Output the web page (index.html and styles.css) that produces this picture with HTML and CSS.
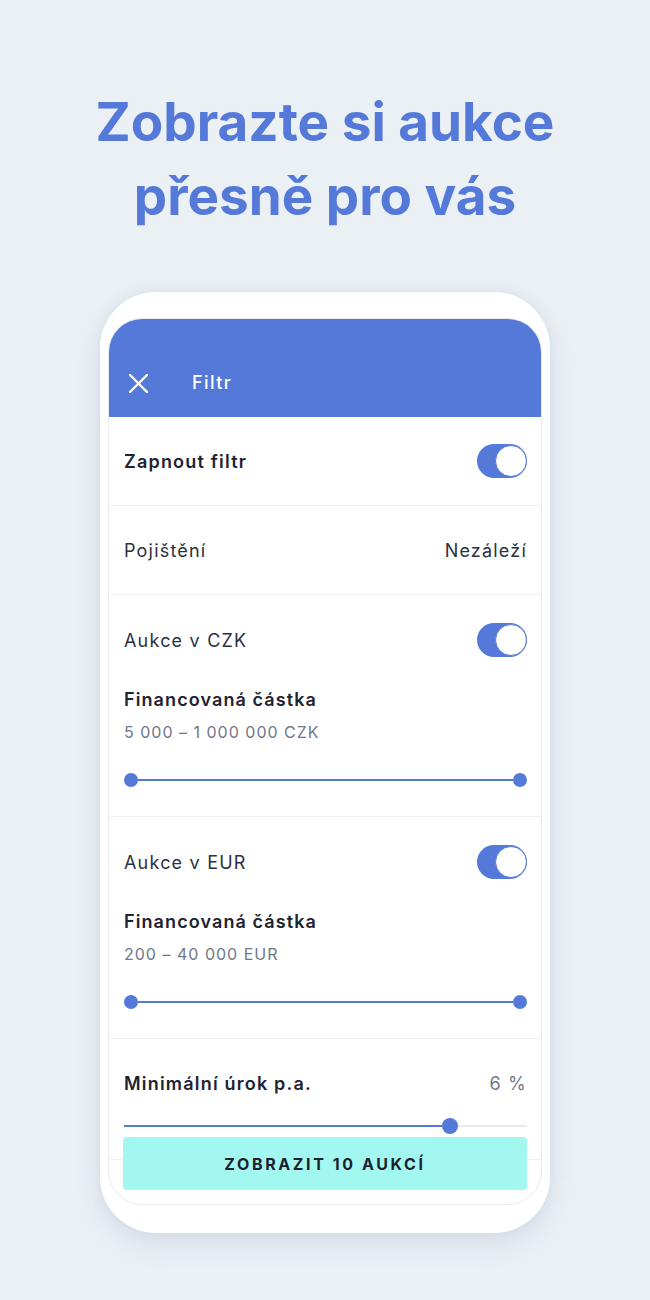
FILE: index.html
```html
<!DOCTYPE html>
<html lang='cs'>
<head>
    <meta charset='UTF-8'>
    <meta name='viewport' content='width=device-width, initial-scale=1.0'>
    <title>Filtr aukcí</title>
    <link rel="stylesheet" href="styles.css">
</head>
<body>
<h1 class='hero'>Zobrazte si aukce<br>přesně pro vás</h1>

<div class='phone'>
    <div class='screen'>
        <div class='topbar'>
            <svg class='close' width='19' height='19' viewBox='0 0 19 19'>
                <path d='M1 1 L18 18 M18 1 L1 18' stroke='#fff' stroke-width='2.4' stroke-linecap='round'/>
            </svg>
            <span class='topbar-title'>Filtr</span>
        </div>

        <div class='row'>
            <span class='label strong'>Zapnout filtr</span>
            <span class='toggle'><span></span></span>
        </div>

        <div class='row'>
            <span class='label'>Pojištění</span>
            <span class='label'>Nezáleží</span>
        </div>

        <div class='section'>
            <div class='section-head'>
                <span class='label'>Aukce v CZK</span>
                <span class='toggle'><span></span></span>
            </div>
            <div class='amount-title'>Financovaná částka</div>
            <div class='amount-range'>5 000 – 1 000 000 CZK</div>
            <div class='range'>
                <span class='dot'></span>
                <span class='line'></span>
                <span class='dot'></span>
            </div>
        </div>

        <div class='section'>
            <div class='section-head'>
                <span class='label'>Aukce v EUR</span>
                <span class='toggle'><span></span></span>
            </div>
            <div class='amount-title'>Financovaná částka</div>
            <div class='amount-range'>200 – 40 000 EUR</div>
            <div class='range'>
                <span class='dot'></span>
                <span class='line'></span>
                <span class='dot'></span>
            </div>
        </div>

        <div class='section last'>
            <div class='section-head'>
                <span class='label strong'>Minimální úrok p.a.</span>
                <span class='label muted'>6 %</span>
            </div>
            <div class='single'>
                <span class='fill' style='width: 79.5%'></span>
                <span class='thumb'></span>
                <span class='rest'></span>
            </div>
        </div>

        <button type='button' class='show'>ZOBRAZIT 10 AUKCÍ</button>
    </div>
</div>
</body>
</html>
```

FILE: styles.css
```css
html, body {
    margin: 0;
    background: #ebf0f5;
    font-family: Inter, "Noto Sans", sans-serif;
}

body {
    min-height: 1300px;
}

.hero {
    margin: 85px 0 0;
    text-align: center;
    color: #5479d8;
    font-size: 53px;
    line-height: 74px;
    font-weight: 700;
    letter-spacing: 0;
}

.phone {
    width: 434px;
    margin: 59px auto 0;
    padding: 26px 8px 28px;
    background: #fff;
    border-radius: 56px;
    box-shadow: 0 12px 24px rgba(196, 204, 220, 0.45), 0 0 12px rgba(218, 224, 234, 0.9);
}

.screen {
    position: relative;
    height: 887px;
    border-radius: 34px;
    border: 1px solid #e8ebf1;
    overflow: hidden;
    box-sizing: border-box;
}

.topbar {
    height: 98px;
    padding: 46px 0 0 20px;
    box-sizing: border-box;
    background: #5479d8;
    display: flex;
    align-items: flex-start;
}

.topbar .close {
    margin-top: 9px;
}

.topbar-title {
    margin-left: 44px;
    line-height: 36px;
    color: #fff;
    font-size: 18px;
    font-weight: 500;
    letter-spacing: 1.4px;
}

.row {
    height: 88px;
    padding: 0 14px 0 15px;
    border-bottom: 1px solid #eef0f4;
    display: flex;
    align-items: center;
    justify-content: space-between;
}

.label {
    color: #2a3142;
    font-size: 18px;
    letter-spacing: 1.2px;
}

.strong {
    font-weight: 600;
    color: #1c2333;
}

.muted {
    color: #6f778a;
}

.toggle {
    position: relative;
    width: 50px;
    height: 34px;
    border-radius: 17px;
    background: #5479d8;
}

.toggle span {
    position: absolute;
    top: 1px;
    right: 0;
    width: 30px;
    height: 30px;
    border-radius: 50%;
    background: #fff;
    border: 1px solid #5479d8;
}

.section {
    padding: 27px 14px 29px 15px;
    border-bottom: 1px solid #eef0f4;
}

.section-head {
    height: 36px;
    display: flex;
    align-items: center;
    justify-content: space-between;
}

.amount-title {
    margin-top: 30px;
    line-height: 24px;
    color: #1c2333;
    font-size: 18px;
    font-weight: 600;
    letter-spacing: 1.1px;
}

.amount-range {
    margin-top: 9px;
    line-height: 22px;
    color: #6f778a;
    font-size: 16px;
    letter-spacing: 1px;
}

.range {
    margin-top: 30px;
    height: 14px;
    display: flex;
    align-items: center;
}

.range .dot {
    width: 14px;
    height: 14px;
    border-radius: 50%;
    background: #5479d8;
    flex: none;
}

.range .line {
    flex: 1;
    height: 2px;
    background: #5479d8;
}

.section.last {
    padding-top: 26px;
    padding-bottom: 25px;
}

.single {
    margin-top: 17px;
    height: 16px;
    display: flex;
    align-items: center;
}

.single .fill {
    height: 2px;
    background: #5479d8;
}

.single .thumb {
    width: 16px;
    height: 16px;
    margin: 0 -2px;
    border-radius: 50%;
    background: #5479d8;
    flex: none;
    position: relative;
}

.single .rest {
    flex: 1;
    height: 2px;
    background: #e6e9ef;
}

.show {
    position: absolute;
    left: 14px;
    right: 14px;
    bottom: 14px;
    height: 53px;
    border: none;
    border-radius: 4px;
    background: #a2f7f1;
    color: #1d1f2e;
    font-family: Inter, "Noto Sans", sans-serif;
    font-size: 16px;
    font-weight: 700;
    letter-spacing: 2.6px;
}
```
